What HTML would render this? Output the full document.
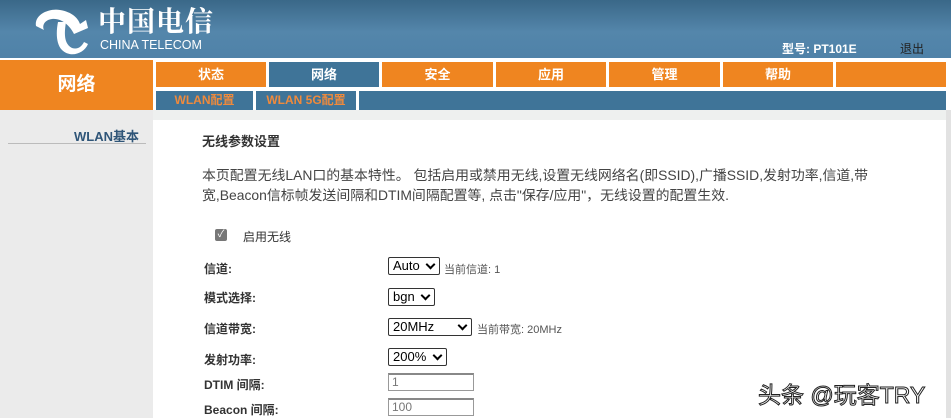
<!DOCTYPE html><html><head><meta charset="utf-8"><style>
body{margin:0;width:951px;height:418px;overflow:hidden;background:#fff;font-family:"Liberation Sans","Noto Sans CJK SC",sans-serif;position:relative}
.a{position:absolute}
.hdr{left:0;top:0;width:951px;height:58px;background:linear-gradient(180deg,#3a6888 0%,#5486ab 55%,#4f82a8 100%)}
.tab{position:absolute;top:62px;height:25px;background:#ef8520;color:#fff;font-weight:bold;font-size:13px;text-align:center;line-height:25px}
.sub{position:absolute;top:91px;height:19px;background:#3f7498;color:#ef8a3c;font-weight:bold;font-size:12px;line-height:19px;text-align:center}
.lbl{position:absolute;left:204px;font-size:12px;color:#333;font-weight:bold}
.sel{position:absolute;left:388px;height:18px;border:1px solid #333;border-radius:2px;font-size:13px;line-height:16px;padding-left:4px;box-sizing:border-box;color:#000}
.sel:after{content:"";position:absolute;right:5px;top:3px;width:5px;height:5px;border-right:2px solid #000;border-bottom:2px solid #000;transform:rotate(45deg)}
.hint{position:absolute;font-size:11px;color:#555}
.inp{position:absolute;left:388px;width:86px;height:18px;border:1px solid #999;border-top:2px solid #888;box-sizing:border-box;font-size:12px;color:#777;padding-left:3px;line-height:15px}
</style></head><body>
<div class="a hdr"></div>
<svg class="a" style="left:30px;top:4px" width="62" height="52" viewBox="0 0 62 52">
<path d="M6 22 C4 10 20 4 30 6 C42 8 48 14 50 20 L56 16 L58 24 L44 30 C40 22 32 14 22 15 C14 16 12 22 14 26 Z" fill="#fff"/>
<path d="M28 18 L36 18 C34 30 34 40 42 44 C48 46 52 42 54 38 L58 40 C54 50 40 54 32 46 C26 40 26 28 28 18 Z" fill="#fff"/>
</svg>
<div class="a" style="left:98px;top:4px;font-size:28px;color:#fff;font-weight:bold;letter-spacing:1px;line-height:32px;font-family:'Noto Serif CJK SC',serif">中国电信</div>
<div class="a" style="left:100px;top:38px;font-size:12.5px;color:#fff;line-height:14px">CHINA TELECOM</div>
<div class="a" style="left:782px;top:40px;font-size:12px;color:#fff;font-weight:bold">型号: PT101E</div>
<div class="a" style="left:900px;top:40px;font-size:12px;color:#222">退出</div>
<div class="a" style="left:0;top:58px;width:951px;height:3px;background:#fff"></div>
<div class="a" style="left:0;top:60px;width:153px;height:50px;background:#ef8520;color:#fff;font-weight:bold;font-size:19px;text-align:center;line-height:50px">网络</div>
<div class="tab" style="left:156px;width:110px">状态</div>
<div class="tab" style="left:269px;width:110px;background:#3f7498">网络</div>
<div class="tab" style="left:382px;width:111px">安全</div>
<div class="tab" style="left:496px;width:110px">应用</div>
<div class="tab" style="left:609px;width:111px">管理</div>
<div class="tab" style="left:723px;width:110px">帮助</div>
<div class="tab" style="left:836px;width:110px"></div>
<div class="sub" style="left:156px;width:97px">WLAN配置</div>
<div class="sub" style="left:256px;width:100px">WLAN 5G配置</div>
<div class="sub" style="left:359px;width:587px"></div>
<div class="a" style="left:0;top:110px;width:946px;height:10px;background:#eef0ef"></div>
<div class="a" style="left:0;top:110px;width:153px;height:308px;background:#ebebeb"></div>
<div class="a" style="left:946px;top:110px;width:5px;height:308px;background:#e2e2e2"></div>
<div class="a" style="left:74px;top:126px;font-size:13px;font-weight:bold;color:#2f5578">WLAN基本</div>
<div class="a" style="left:8px;top:143px;width:138px;height:1px;background:#bbb"></div>
<div class="a" style="left:202px;top:131px;font-size:13px;font-weight:bold;color:#333">无线参数设置</div>
<div class="a" style="left:202px;top:165px;font-size:13.9px;color:#444;line-height:20px;width:720px;white-space:nowrap">本页配置无线LAN口的基本特性。 包括启用或禁用无线,设置无线网络名(即SSID),广播SSID,发射功率,信道,带<br>宽,Beacon信标帧发送间隔和DTIM间隔配置等, 点击"保存/应用"，无线设置的配置生效.</div>
<div class="a" style="left:215px;top:229px;width:12px;height:12px;background:#777;border-radius:2px;color:#fff;font-size:10px;line-height:12px;text-align:center">✓</div>
<div class="a" style="left:243px;top:228px;font-size:12px;color:#333">启用无线</div>
<div class="lbl" style="top:260px">信道:</div>
<div class="sel" style="top:257px;width:52px">Auto</div><div class="hint" style="left:444px;top:261px">当前信道: 1</div>
<div class="lbl" style="top:289px">模式选择:</div>
<div class="sel" style="top:288px;width:47px">bgn</div>
<div class="lbl" style="top:320px">信道带宽:</div>
<div class="sel" style="top:318px;width:84px">20MHz</div><div class="hint" style="left:477px;top:321px">当前带宽: 20MHz</div>
<div class="lbl" style="top:351px">发射功率:</div>
<div class="sel" style="top:348px;width:59px">200%</div>
<div class="lbl" style="top:376px">DTIM 间隔:</div>
<div class="inp" style="top:373px">1</div>
<div class="lbl" style="top:401px">Beacon 间隔:</div>
<div class="inp" style="top:398px">100</div>
<div class="a" style="left:758px;top:376px;font-size:23px;color:#fff;-webkit-text-stroke:1px #222">头条 @玩客TRY</div>
</body></html>
